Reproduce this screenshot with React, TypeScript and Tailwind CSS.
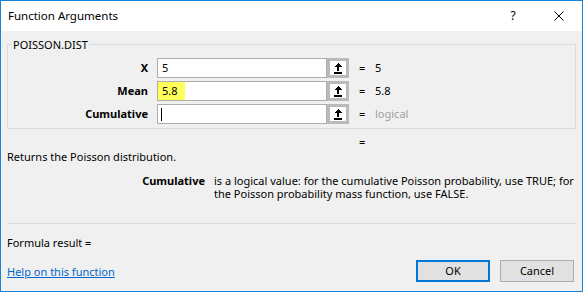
import React from "react";

const ArrowIcon = () => (
  <svg width="8" height="11" viewBox="0 0 8 11" shapeRendering="crispEdges">
    <path d="M4 0 L8 4 L5 4 L5 8 L3 8 L3 4 L0 4 Z" fill="#000" />
    <rect x="0" y="9" width="8" height="2" fill="#000" />
  </svg>
);

const RefButton = () => (
  <div className="w-[22px] h-[20px] border-[3px] border-[#bababa] bg-white flex items-center justify-center shrink-0">
    <ArrowIcon />
  </div>
);

type RowProps = {
  label: string;
  input: React.ReactNode;
  value: React.ReactNode;
};

const Row = ({ label, input, value }: RowProps) => (
  <div className="flex items-center h-[20px]">
    <div className="w-[140px] text-right font-bold leading-[20px] shrink-0">{label}</div>
    <div className="ml-[9px] w-[170px] h-[20px] border border-[#adadad] bg-white flex items-stretch shrink-0">
      {input}
    </div>
    <RefButton />
    <div className="ml-[10px] w-[16px] leading-[20px] shrink-0">=</div>
    <div className="leading-[20px]">{value}</div>
  </div>
);

export default function App() {
  return (
    <div
      className="w-[583px] h-[292px] border border-[#1883d7] bg-[#f0f0f0] flex flex-col text-[11px] text-black overflow-hidden"
      style={{ fontFamily: '"Noto Sans", sans-serif' }}
    >
      {/* Title bar */}
      <div className="h-[30px] bg-white flex items-center shrink-0">
        <div className="pl-[7px] flex-1 text-[11.5px] leading-[30px]">Function Arguments</div>
        <div className="w-[46px] h-[30px] flex items-center justify-center text-[12px]">?</div>
        <div className="w-[46px] h-[30px] flex items-center justify-center">
          <svg width="10" height="10" viewBox="0 0 10 10">
            <path d="M0.5 0.5 L9.5 9.5 M9.5 0.5 L0.5 9.5" stroke="#000" strokeWidth="1" />
          </svg>
        </div>
      </div>

      {/* Body */}
      <div className="flex-1 flex flex-col px-[6px]">
        {/* Group box */}
        <div className="relative mt-[13px] border border-[#dcdcdc] pt-[13px] pb-[4px] flex flex-col gap-[3px]">
          <div className="absolute top-[-8px] left-[4px] px-[1px] bg-[#f0f0f0] leading-[16px]">POISSON.DIST</div>
          <Row
            label="X"
            input={<span className="pl-[4px] leading-[18px]">5</span>}
            value={<span>5</span>}
          />
          <Row
            label="Mean"
            input={<span className="pl-[4px] w-[27px] bg-[#ffff5c] leading-[18px]">5.8</span>}
            value={<span>5.8</span>}
          />
          <Row
            label="Cumulative"
            input={
              <span className="pl-[3px] flex items-center">
                <span className="w-[1px] h-[13px] bg-black" />
              </span>
            }
            value={<span className="text-[#a0a0a0]">logical</span>}
          />
        </div>

        <div className="mt-[6px] ml-[352px] leading-[14px]">=</div>

        <div className="mt-[1px] leading-[14px]">Returns the Poisson distribution.</div>

        <div className="mt-[10px] flex leading-[13px]">
          <div className="w-[198px] text-right font-bold shrink-0">Cumulative</div>
          <div className="ml-[9px] whitespace-nowrap">
            is a logical value: for the cumulative Poisson probability, use TRUE; for
            <br />
            the Poisson probability mass function, use FALSE.
          </div>
        </div>

        <div className="mt-[23px] h-[1px] bg-[#dcdcdc]" />

        <div className="mt-[12px] leading-[14px]">Formula result =</div>

        <div className="mt-[10px] flex items-center justify-between h-[22px]">
          <a className="text-[#0066cc] underline leading-[14px] mt-[1px]" href="#">
            Help on this function
          </a>
          <div className="flex gap-[10px] mr-[2px]">
            <button className="w-[74px] h-[22px] border-2 border-[#0078d7] bg-[#e1e1e1] text-[11px] leading-[18px]">
              OK
            </button>
            <button className="w-[74px] h-[22px] border border-[#adadad] bg-[#e1e1e1] text-[11px] leading-[20px]">
              Cancel
            </button>
          </div>
        </div>
      </div>
    </div>
  );
}
